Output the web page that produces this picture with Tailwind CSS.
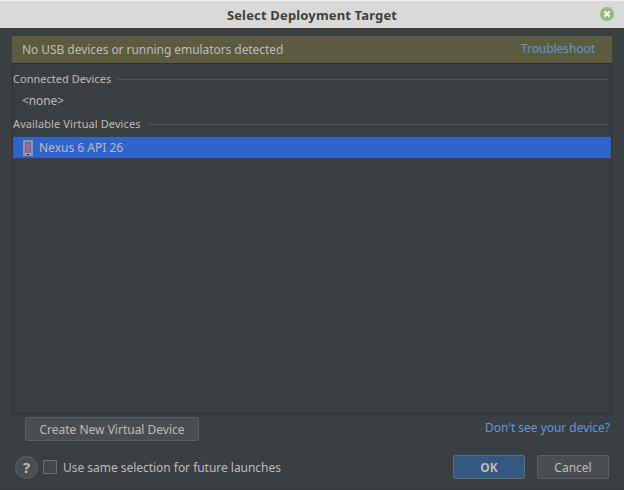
<!DOCTYPE html>
<html lang="en">
<head>
<meta charset="utf-8">
<title>Select Deployment Target</title>
<script src="https://cdn.jsdelivr.net/npm/@tailwindcss/browser@4"></script>
</head>
<body class="w-[624px] h-[490px] overflow-hidden bg-[#3c3f41] text-[#bbbbbb] font-['Noto_Sans',sans-serif] text-[12px] leading-4 whitespace-nowrap">
<div class="flex flex-col h-[490px] border-b border-[#333638]">
  <header class="h-7 shrink-0 bg-[#d9d9d9] border-t border-[#eeeeee] grid grid-cols-[1fr_auto_1fr] items-center text-[#404040]">
    <span></span>
    <h1 class="text-[13px] font-bold leading-5 tracking-[0.16px]">Select Deployment Target</h1>
    <button class="justify-self-end mr-[10px] -mt-px" aria-label="Close">
      <svg class="block" width="14" height="14" viewBox="0 0 14 14"><circle cx="7" cy="7" r="7" fill="#9ab87c"/><path d="M4.4 4.4l5.2 5.2M9.6 4.4l-5.2 5.2" stroke="#fff" stroke-width="1.8"/></svg>
    </button>
  </header>
  <main class="mt-2 mx-3 h-[378px] shrink-0 flex flex-col">
    <div class="h-[27px] shrink-0 bg-[#5b5b40] flex justify-between pl-[10px] pr-[17px]">
      <span class="pt-[6px] tracking-[-0.06px]">No USB devices or running emulators detected</span>
      <a class="pt-[5px] text-[#5f96cc] tracking-[-0.06px]">Troubleshoot</a>
    </div>
    <section class="flex-1 border border-[#2f3234] flex flex-col">
      <div class="mt-[7px] h-4 flex items-center gap-[6px] pr-[3px] text-[11px]"><span class="tracking-[0.03px]">Connected Devices</span><i class="h-px flex-1 bg-[#515456]"></i></div>
      <div class="mt-[6px] h-4 pl-[9px] tracking-[-0.1px]">&lt;none&gt;</div>
      <div class="mt-[7px] h-4 flex items-center gap-[6px] pr-[3px] text-[11px]"><span class="tracking-[0.1px]">Available Virtual Devices</span><i class="h-px flex-1 bg-[#515456]"></i></div>
      <div class="mt-[5px] h-[21px] bg-[#2f65ca] flex items-center pl-[10px] gap-[6px]">
        <svg class="mt-px" width="10" height="16" viewBox="0 0 10 16"><rect width="10" height="16" rx="1" fill="#8e969f"/><rect x="2" y="2" width="6" height="11" fill="#80609f"/><rect x="3" y="4" width="4" height="7" fill="#a965a2"/><rect x="2" y="13" width="6" height="1" fill="#a7adb3"/><rect x="4" y="14" width="2" height="1" fill="#111"/></svg>
        <span>Nexus 6 API 26</span>
      </div>
    </section>
  </main>
  <div class="mt-[3px] h-6 flex justify-between pl-[25px] pr-[14px]">
    <button class="w-[174px] h-6 pt-px rounded-xs border border-[#5e6162] bg-[#4b4e50]">Create New Virtual Device</button>
    <a class="pt-[3px] text-[#5f96e0] tracking-[-0.03px]">Don't see your device?</a>
  </div>
  <footer class="mt-[14px] h-6 flex items-center pl-[15px] pr-[15px]">
    <button class="size-[23px] rounded-full border border-[#5e6162] bg-[#4b4e50] font-bold text-[15px] leading-5">?</button>
    <span class="ml-[5px] size-[14px] border border-[#6b6e70] bg-[#43474a]"></span>
    <label class="ml-[6px] pt-[2px] tracking-[-0.03px]">Use same selection for future launches</label>
    <button class="ml-auto w-[72px] h-6 pt-px rounded-xs border border-[#4c708c] bg-[#365880] font-bold">OK</button>
    <button class="ml-3 w-[72px] h-6 pt-px rounded-xs border border-[#5e6162] bg-[#4b4e50]">Cancel</button>
  </footer>
</div>
</body>
</html>
